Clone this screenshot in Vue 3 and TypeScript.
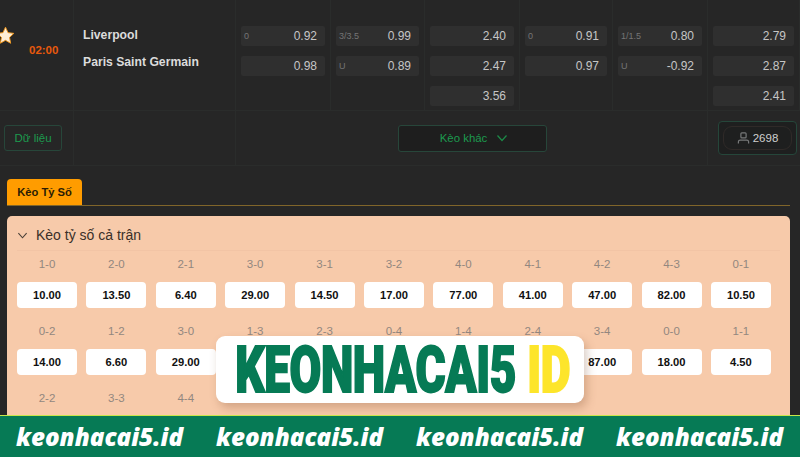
<template>
  <div class="page">
    <section class="match">
      <div class="time-col">
        <svg class="star" viewBox="0 0 24 24" width="19" height="19">
          <path d="M12 1.500l3.200 6.900 7.300.9-5.400 5.100 1.400 7.400L12 18.100l-6.500 3.700 1.400-7.400L1.500 9.300l7.300-.9z" fill="#fdeed8" stroke="#f39a1f" stroke-width="1.200" />
        </svg>
        <span class="time">02:00</span>
      </div>
      <div class="teams">
        <span>Liverpool</span>
        <span>Paris Saint Germain</span>
      </div>
      <div v-for="(group, i) in oddsGroups" :key="i" class="odds-col">
        <div v-for="(cell, j) in group" :key="j" class="odd">
          <span class="handicap">{{ cell.label }}</span>
          <span>{{ cell.value }}</span>
        </div>
      </div>

      <div class="foot data-col">
        <button class="outline data-btn">Dữ liệu</button>
      </div>
      <div class="foot empty-col"></div>
      <div class="foot more-col">
        <button class="outline more-btn">
          Kèo khác
          <svg viewBox="0 0 12 12" width="12" height="12" fill="none" stroke="#1c8a48" stroke-width="1.200">
            <path d="M1.500 3.500L6 8.500l4.500-5" />
          </svg>
        </button>
      </div>
      <div class="foot live-col">
        <div class="live-box">
          <div class="live-pill">
            <svg viewBox="0 0 14 14" width="13" height="13" fill="none" stroke="#77797a" stroke-width="1.300">
              <rect x="4.200" y="1" width="5.600" height="5.400" rx="1" />
              <path d="M1.500 12.500V10.500q0-1.800 2-1.800h7q2 0 2 1.800v2" />
            </svg>
            <span>2698</span>
          </div>
        </div>
      </div>
    </section>

    <nav class="tabs">
      <span class="tab">Kèo Tỷ Số</span>
    </nav>

    <section class="panel">
      <header class="panel-head">
        <svg viewBox="0 0 12 12" width="11" height="11" fill="none" stroke="#4a4038" stroke-width="1.200">
          <path d="M1.500 3.500L6 8.500l4.500-5" />
        </svg>
        <span>Kèo tỷ số cả trận</span>
      </header>
      <div class="scores">
        <div v-for="(s, i) in scores" :key="i" class="score">
          <span class="score-label">{{ s.label }}</span>
          <button v-if="s.hasButton" class="score-btn">{{ s.value }}</button>
        </div>
      </div>
    </section>

    <div class="logo">
      <span class="logo-text">KEONHACAI5 <em>ID</em></span>
    </div>

    <footer class="banner">
      <span v-for="n in 4" :key="n">keonhacai5.id</span>
    </footer>
  </div>
</template>

<script setup lang="ts">
interface OddCell {
  label: string
  value: string
}

interface Score {
  label: string
  value: string
  hasButton: boolean
}

const oddsGroups: OddCell[][] = [
  [{ label: '0', value: '0.92' }, { label: '', value: '0.98' }],
  [{ label: '3/3.5', value: '0.99' }, { label: 'U', value: '0.89' }],
  [{ label: '', value: '2.40' }, { label: '', value: '2.47' }, { label: '', value: '3.56' }],
  [{ label: '0', value: '0.91' }, { label: '', value: '0.97' }],
  [{ label: '1/1.5', value: '0.80' }, { label: 'U', value: '-0.92' }],
  [{ label: '', value: '2.79' }, { label: '', value: '2.87' }, { label: '', value: '2.41' }],
]

const firstRow: [string, string][] = [
  ['1-0', '10.00'], ['2-0', '13.50'], ['2-1', '6.40'], ['3-0', '29.00'], ['3-1', '14.50'], ['3-2', '17.00'],
  ['4-0', '77.00'], ['4-1', '41.00'], ['4-2', '47.00'], ['4-3', '82.00'], ['0-1', '10.50'],
]

// the middle of this row sits behind the logo, so those buttons stay empty
const secondRow: [string, string][] = [
  ['0-2', '14.00'], ['1-2', '6.60'], ['3-0', '29.00'], ['1-3', ''], ['2-3', ''], ['0-4', ''],
  ['1-4', ''], ['2-4', ''], ['3-4', '87.00'], ['0-0', '18.00'], ['1-1', '4.50'],
]

const scores: Score[] = [
  ...firstRow.map(([label, value]) => ({ label, value, hasButton: true })),
  ...secondRow.map(([label, value]) => ({ label, value, hasButton: true })),
  ...['2-2', '3-3', '4-4'].map((label) => ({ label, value: '', hasButton: false })),
]
</script>

<style scoped>
.page {
  position: relative;
  width: 800px;
  height: 457px;
  overflow: hidden;
  background: #262626;
  font-family: "Liberation Sans", Arial, sans-serif;
}

.match {
  display: grid;
  grid-template-columns: 74px 162px 95px 94px 95px 93px 95px 92px;
  grid-template-rows: 111px 55px;
}

.time-col {
  display: flex;
  border-right: 1px solid #2a2c2b;
  border-bottom: 1px solid #2a2c2b;
}

.star {
  margin: 26px 0 0 -4px;
}

.time {
  margin: 44px 0 0 14px;
  font-size: 11.500px;
  font-weight: 700;
  color: #e8590c;
}

.teams {
  display: flex;
  flex-direction: column;
  gap: 12px;
  padding: 28px 0 0 9px;
  font-size: 12.200px;
  font-weight: 700;
  line-height: 15px;
  color: #dcdcdc;
  border-right: 1px solid #2a2c2b;
  border-bottom: 1px solid #2a2c2b;
}

.odds-col {
  display: flex;
  flex-direction: column;
  gap: 10px;
  padding: 26px 5px 0 5px;
  border-right: 1px solid #2a2c2b;
  border-bottom: 1px solid #2a2c2b;
}

.odds-col:last-of-type {
  border-right: 0;
}

.odd {
  display: flex;
  justify-content: space-between;
  align-items: center;
  height: 20px;
  padding: 0 8px 0 3px;
  background: #2f2f2f;
  border-radius: 2px;
  font-size: 12px;
  color: #c6c6c6;
}

.handicap {
  font-size: 9px;
  color: #757575;
}

.foot {
  display: flex;
  align-items: center;
  border-bottom: 1px solid #2a2c2b;
}

.data-col {
  border-right: 1px solid #2a2c2b;
  padding: 0 0 1px 4px;
}

.empty-col {
  border-right: 1px solid #2a2c2b;
}

.more-col {
  grid-column: span 5;
  justify-content: center;
  padding-left: 2px;
  border-right: 1px solid #2a2c2b;
}

.outline {
  font-family: inherit;
  font-size: 11.400px;
  color: #1c9a4e;
  background: #1e1e1e;
  border: 1px solid #27463a;
  border-radius: 3px;
}

.data-btn {
  width: 58px;
  height: 26px;
  padding: 0;
  background: transparent;
  font-size: 11.500px;
}

.more-btn {
  display: flex;
  justify-content: center;
  align-items: center;
  gap: 9px;
  width: 149px;
  height: 27px;
  padding: 0 0 0 3px;
}

.live-col {
  justify-content: flex-end;
  padding-right: 3px;
}

.live-box {
  padding: 4px;
  background: #1e1f1f;
  border: 1px solid #25463a;
  border-radius: 4px;
}

.live-pill {
  display: flex;
  box-sizing: border-box;
  justify-content: center;
  align-items: center;
  gap: 3px;
  width: 69px;
  height: 24px;
  border: 1px solid #2f2a28;
  border-radius: 9px;
  font-size: 11.500px;
  color: #cfcfcf;
}

.tabs {
  display: flex;
  height: 26px;
  margin: 13px 10px 0 7px;
  border-bottom: 1px solid #80652a;
}

.tab {
  width: 75px;
  text-align: center;
  line-height: 27px;
  font-size: 11.200px;
  font-weight: 700;
  color: #2a1c04;
  background: #ff9c00;
  border-radius: 4px 4px 0 0;
}

.panel {
  margin: 10px 10px 0 7px;
  padding: 0 10px;
  height: 300px;
  background: #f7caaa;
  border-radius: 5px;
}

.panel-head {
  display: flex;
  align-items: center;
  box-sizing: border-box;
  gap: 8px;
  height: 35px;
  padding-top: 4px;
  font-size: 14px;
  color: #3a3029;
  border-bottom: 1px solid #f2c4a5;
}

.scores {
  display: grid;
  grid-template-columns: repeat(11, 60px);
  column-gap: 9.400px;
}

.score {
  display: flex;
  flex-direction: column;
  height: 67px;
}

.score-label {
  height: 31px;
  text-align: center;
  line-height: 27px;
  font-size: 11.500px;
  color: #92877f;
}

.score-btn {
  height: 26px;
  padding: 0;
  font-family: inherit;
  font-size: 11.200px;
  font-weight: 700;
  color: #111;
  background: #fff;
  border: 0;
  border-radius: 4px;
}

.logo {
  position: absolute;
  left: 216px;
  top: 336px;
  display: flex;
  justify-content: flex-end;
  align-items: center;
  box-sizing: border-box;
  width: 368px;
  height: 67px;
  padding-right: 14px;
  background: #fff;
  border-radius: 9px;
  box-shadow: 3px 5px 10px rgba(120, 70, 40, 0.28);
}

.logo-text {
  display: block;
  white-space: nowrap;
  font-family: Roboto, sans-serif;
  font-size: 46px;
  font-weight: 900;
  line-height: 48px;
  letter-spacing: -0.4px;
  color: #067a55;
  -webkit-text-stroke: 1.400px #067a55;
  transform: scaleY(1.400);
}

.logo-text em {
  font-style: normal;
  color: #fde52b;
  -webkit-text-stroke: 1.400px #fde52b;
}

.banner {
  position: absolute;
  left: 0;
  right: 0;
  bottom: 0;
  display: grid;
  grid-template-columns: repeat(4, 200px);
  align-items: center;
  height: 42px;
  padding-left: 16px;
  box-sizing: border-box;
  background: #067a55;
  border-top: 1px solid #c8e64a;
  font-family: "Open Sans", sans-serif;
  font-size: 24.200px;
  font-style: italic;
  font-weight: 800;
  color: #fff;
}
</style>
